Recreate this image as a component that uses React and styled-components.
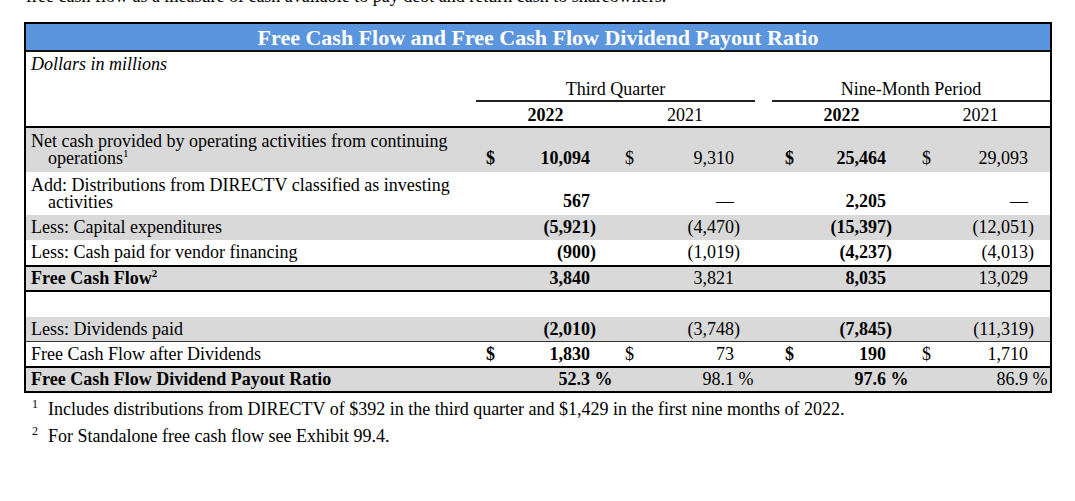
import React from 'react';
import styled, { createGlobalStyle } from 'styled-components';

const GlobalStyle = createGlobalStyle`
  html, body { margin: 0; padding: 0; background: #ffffff; }
  body {
    font-family: "Liberation Serif", "Times New Roman", serif;
    color: #000000;
  }
`;

const COLS = '450px 139px 140px 17px 139px 139px';
const GRAY = '#d9d9d9';

const Page = styled.div`
  width: 1075px;
  height: 501px;
  overflow: hidden;
  box-sizing: border-box;
  padding-left: 24px;
`;

const Intro = styled.p`
  margin: -14px 0 0 2px;
  font-size: 18px;
  line-height: 20px;
  height: 20px;
  white-space: nowrap;
`;

const Table = styled.div`
  margin-top: 16px;
  width: 1028px;
  box-sizing: border-box;
  border: 2px solid #000;
`;

const TitleBar = styled.div`
  height: 26px;
  line-height: 27px;
  background: #5b95de;
  color: #ffffff;
  font-weight: bold;
  font-size: 22px;
  text-align: center;
  border-bottom: 2px solid #111;
`;

const Header = styled.div`
  display: grid;
  grid-template-columns: ${COLS};
  grid-template-rows: 24px 26px 24px;
  border-bottom: 2px solid #000;
  font-size: 18px;
`;

const Caption = styled.div`
  grid-column: 1;
  grid-row: 1;
  padding-left: 5px;
  line-height: 24px;
  font-style: italic;
`;

const GroupLabel = styled.div`
  grid-row: 2;
  grid-column: ${(p) => p.$col};
  box-sizing: border-box;
  padding-top: 3px;
  line-height: 21px;
  text-align: center;
  border-bottom: 2px solid #222;
`;

const YearLabel = styled.div`
  grid-row: 3;
  grid-column: ${(p) => p.$col};
  line-height: 26px;
  text-align: center;
  font-weight: ${(p) => (p.$bold ? 'bold' : 'normal')};
`;

const Row = styled.div`
  display: grid;
  grid-template-columns: ${COLS};
  align-items: center;
  height: ${(p) => p.$h}px;
  background: ${(p) => (p.$shade ? GRAY : '#ffffff')};
  border-bottom: ${(p) => (p.$border ? `${p.$border}px solid ${p.$border === 1 ? '#333' : '#000'}` : 'none')};
  font-size: 18px;
  line-height: 17px;
`;

const Label = styled.div`
  grid-column: 1;
  padding-left: 5px;
  white-space: nowrap;
  font-weight: ${(p) => (p.$bold ? 'bold' : 'normal')};
`;

const Indent = styled.span`
  display: block;
  padding-left: 17px;
`;

const Sup = styled.sup`
  font-size: 11px;
  line-height: 0;
  vertical-align: 7px;
`;

const Amount = styled.div`
  grid-column: ${(p) => p.$col};
  display: flex;
  justify-content: space-between;
  align-items: baseline;
  align-self: ${(p) => (p.$multi ? 'end' : 'center')};
  padding: 0 ${(p) => p.$pr}px ${(p) => (p.$multi ? 5 : 0)}px ${(p) => p.$pl}px;
  font-weight: ${(p) => (p.$bold ? 'bold' : 'normal')};
  white-space: nowrap;
`;

const Hang = styled.span`
  display: inline-block;
  width: 0;
  white-space: pre;
`;

const Footnotes = styled.div`
  margin-top: 3px;
  font-size: 18px;
  line-height: 27px;
`;

const Footnote = styled.div`
  padding-left: 8px;
  white-space: nowrap;
`;

const Marker = styled.span`
  display: inline-block;
  width: 16px;
  font-size: 12px;
  vertical-align: 7px;
  line-height: 0;
`;

const PERIODS = [
  { col: 2, pl: 10, pr: 25, bold: true },
  { col: 3, pl: 10, pr: 21, bold: false },
  { col: 5, pl: 13, pr: 25, bold: true },
  { col: 6, pl: 11, pr: 22, bold: false },
];

const ROWS = [
  {
    label: ['Net cash provided by operating activities from continuing', 'operations'],
    sup: '1', h: 44, shade: true, dollar: true,
    values: ['10,094', '9,310', '25,464', '29,093'],
  },
  {
    label: ['Add: Distributions from DIRECTV classified as investing', 'activities'],
    h: 43, shade: false,
    values: ['567', '—', '2,205', '—'],
  },
  { label: 'Less: Capital expenditures', h: 25, shade: true, values: ['(5,921)', '(4,470)', '(15,397)', '(12,051)'] },
  { label: 'Less: Cash paid for vendor financing', h: 25, shade: false, border: 2, values: ['(900)', '(1,019)', '(4,237)', '(4,013)'] },
  { label: 'Free Cash Flow', sup: '2', bold: true, h: 23, shade: true, border: 2, values: ['3,840', '3,821', '8,035', '13,029'] },
  { blank: true, h: 25, shade: false },
  { label: 'Less: Dividends paid', h: 24, shade: true, border: 1, values: ['(2,010)', '(3,748)', '(7,845)', '(11,319)'] },
  { label: 'Free Cash Flow after Dividends', h: 24, shade: false, border: 2, dollar: true, values: ['1,830', '73', '190', '1,710'] },
  { label: 'Free Cash Flow Dividend Payout Ratio', bold: true, h: 23, shade: true, values: ['52.3 %', '98.1 %', '97.6 %', '86.9 %'] },
];

function splitValue(v) {
  if (v.endsWith(')')) return [v.slice(0, -1), ')'];
  if (v.endsWith(' %')) return [v.slice(0, -2), ' %'];
  return [v, ''];
}

function Value({ text }) {
  const [main, hang] = splitValue(text);
  return (
    <span>
      {main}
      {hang && <Hang>{hang}</Hang>}
    </span>
  );
}

function LabelCell({ row }) {
  const multi = Array.isArray(row.label);
  const first = multi ? row.label[0] : row.label;
  const last = multi ? row.label[1] : null;
  return (
    <Label $bold={row.bold}>
      {multi ? (
        <>
          {first}
          <Indent>
            {last}
            {row.sup && <Sup>{row.sup}</Sup>}
          </Indent>
        </>
      ) : (
        <>
          {first}
          {row.sup && <Sup>{row.sup}</Sup>}
        </>
      )}
    </Label>
  );
}

export default function App() {
  return (
    <>
      <GlobalStyle />
      <Page>
        <Intro>free cash flow as a measure of cash available to pay debt and return cash to shareowners.</Intro>
        <Table>
          <TitleBar>Free Cash Flow and Free Cash Flow Dividend Payout Ratio</TitleBar>
          <Header>
            <Caption>Dollars in millions</Caption>
            <GroupLabel $col="2 / span 2">Third Quarter</GroupLabel>
            <GroupLabel $col="5 / span 2">Nine-Month Period</GroupLabel>
            <YearLabel $col={2} $bold>2022</YearLabel>
            <YearLabel $col={3}>2021</YearLabel>
            <YearLabel $col={5} $bold>2022</YearLabel>
            <YearLabel $col={6}>2021</YearLabel>
          </Header>
          {ROWS.map((row, i) => (
            <Row key={i} $h={row.h} $shade={row.shade} $border={row.border}>
              {!row.blank && <LabelCell row={row} />}
              {!row.blank &&
                PERIODS.map((p, j) => (
                  <Amount
                    key={j}
                    $col={p.col}
                    $pl={p.pl}
                    $pr={p.pr}
                    $bold={p.bold}
                    $multi={Array.isArray(row.label)}
                  >
                    <span>{row.dollar ? '$' : ''}</span>
                    <Value text={row.values[j]} />
                  </Amount>
                ))}
            </Row>
          ))}
        </Table>
        <Footnotes>
          <Footnote>
            <Marker>1</Marker>
            Includes distributions from DIRECTV of $392 in the third quarter and $1,429 in the first nine months of 2022.
          </Footnote>
          <Footnote>
            <Marker>2</Marker>
            For Standalone free cash flow see Exhibit 99.4.
          </Footnote>
        </Footnotes>
      </Page>
    </>
  );
}
